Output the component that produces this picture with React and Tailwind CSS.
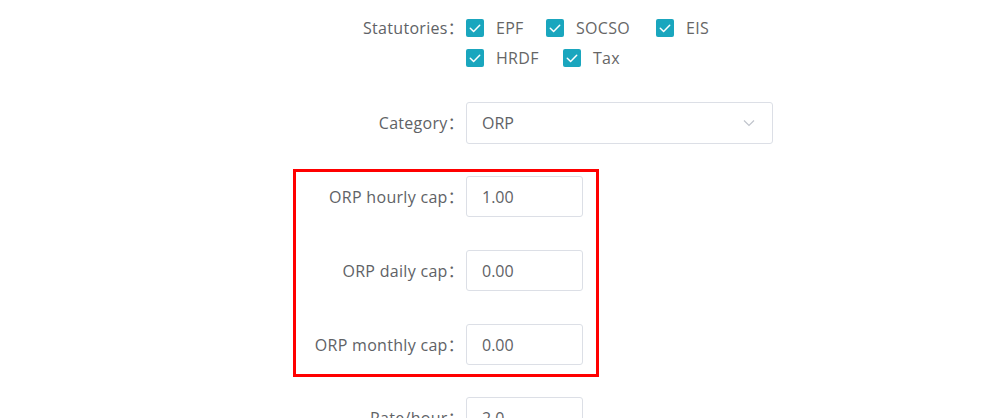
import React from 'react';

const font = { fontFamily: '"Open Sans", "Noto Sans CJK SC", sans-serif' };

function Check({ label, width = '' }) {
    return (
        <div className={`flex items-center ${width}`}>
            <span className="flex h-[18px] w-[18px] items-center justify-center rounded-[2px] bg-[#1aa6be]">
                <svg viewBox="0 0 18 18" className="h-[18px] w-[18px]" fill="none" stroke="white" strokeWidth="1.5" strokeLinecap="round" strokeLinejoin="round">
                    <polyline points="4.3,9.3 7.6,12.5 13.7,6.3" />
                </svg>
            </span>
            <span className="ml-[12px] text-[16px] tracking-[0.3px] text-[#666]">{label}</span>
        </div>
    );
}

function Row({ label, width = 'w-[176px]', children, className = '' }) {
    return (
        <div className={`flex items-center ${className}`}>
            <div className={`${width} text-right text-[16px] tracking-[0.3px] text-[#606266] pr-[2px]`}>{label}</div>
            {children}
        </div>
    );
}

function NumInput({ value }) {
    return (
        <div className="h-[41px] w-[117px] rounded-[3px] border border-[#dcdfe6] bg-white flex items-center px-[15px] text-[16px] text-[#606266]">
            {value}
        </div>
    );
}

export default function App() {
    return (
        <div className="h-[418px] w-full overflow-hidden bg-white" style={font}>
            <div className="pl-[290px] pt-[13px]">
                <div className="flex items-start">
                    <div className="w-[176px] h-[30px] flex items-center justify-end pr-[2px] text-[16px] tracking-[0.3px] text-[#606266]">Statutories：</div>
                    <div className="flex flex-col">
                        <div className="flex h-[30px] items-center">
                            <Check label="EPF" width="w-[80px]" />
                            <Check label="SOCSO" width="w-[110px]" />
                            <Check label="EIS" />
                        </div>
                        <div className="flex h-[30px] items-center">
                            <Check label="HRDF" width="w-[97px]" />
                            <Check label="Tax" />
                        </div>
                    </div>
                </div>

                <Row label="Category：" className="mt-[29px]">
                    <div className="h-[42px] w-[307px] rounded-[3px] border border-[#dcdfe6] flex items-center justify-between px-[15px] text-[16px] text-[#606266]">
                        <span>ORP</span>
                        <svg viewBox="0 0 12 8" className="h-[8px] w-[12px] mr-[2px]" fill="none" stroke="#c0c4cc" strokeWidth="1.2">
                            <polyline points="1,1.5 6,6.5 11,1.5" />
                        </svg>
                    </div>
                </Row>

                <div className="mt-[25px] ml-[3px] w-[306px] border-[3px] border-[#ff0000] pt-[4px] pb-[9px] flex flex-col gap-[33px]">
                    <Row label="ORP hourly cap：" width="w-[170px]">
                        <NumInput value="1.00" />
                    </Row>
                    <Row label="ORP daily cap：" width="w-[170px]">
                        <NumInput value="0.00" />
                    </Row>
                    <Row label="ORP monthly cap：" width="w-[170px]">
                        <NumInput value="0.00" />
                    </Row>
                </div>

                <Row label="Rate/hour：" className="mt-[20px]">
                    <NumInput value="2.0" />
                </Row>
            </div>
        </div>
    );
}
